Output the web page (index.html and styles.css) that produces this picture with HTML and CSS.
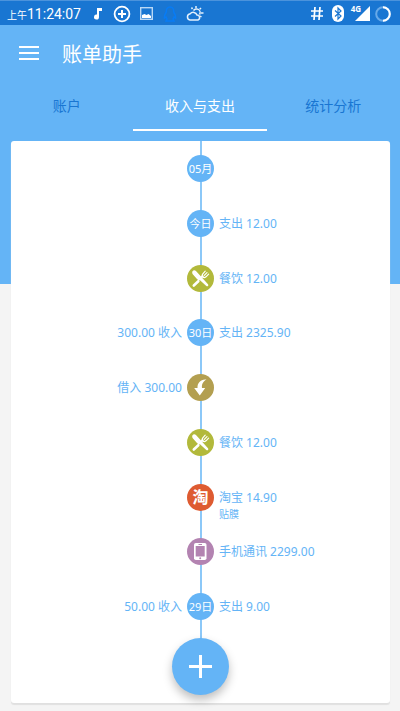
FILE: index.html
```html
<!DOCTYPE html>
<html lang="zh-CN">
<head>
<meta charset="utf-8">
<meta name="viewport" content="width=device-width, initial-scale=1">
<title>账单助手</title>
<link rel="stylesheet" href="styles.css">
</head>
<body>
<svg class="defs" aria-hidden="true">
  <symbol id="food" viewBox="0 0 27 27">
    <path d="M5.500 6.200C6.500 4.800 8 5 9.200 6.200L21 19.200C22 20.500 20.500 22 19.300 21L13 15.200C12 15.500 11 15.200 10.200 14.200L6.200 9.800C5.200 8.700 4.900 7.200 5.500 6.200Z" fill="#fff"/>
    <path d="M6.800 20.500L11.300 16.200" stroke="#fff" stroke-width="2.600" stroke-linecap="round"/>
    <path d="M14.200 12.500L16.200 10.600" stroke="#fff" stroke-width="2"/>
    <path d="M15.800 8.800C14.800 10.200 15 11.300 15.800 12C16.600 12.800 17.800 12.800 19 11.800L21.600 9.200M15.800 8.800L18.200 6.200M17.300 10.400L20 7.700" fill="none" stroke="#fff" stroke-width="1.200" stroke-linecap="round"/>
  </symbol>
</svg>
<div class="hero">
  <div class="status">
    <span class="time"><small>上午</small>11:24:07</span>
    <svg class="s-music" width="10" height="13" viewBox="0 0 10 13"><path d="M4 1h5v3H6v6a2.500 2.500 0 1 1-2-2.400z" fill="#fff"/></svg>
    <svg class="s-plus" width="18" height="18" viewBox="0 0 18 18"><circle cx="9" cy="9" r="7.400" fill="none" stroke="#fff" stroke-width="1.800"/><path d="M9 5v8M5 9h8" stroke="#fff" stroke-width="2"/></svg>
    <svg class="s-image" width="13" height="13" viewBox="0 0 13 13"><rect x=".7" y=".7" width="11.600" height="11.600" fill="none" stroke="#b9d8f5" stroke-width="1.400"/><path d="M2 11V8l2.500-1 2 1 2-1L11 9v2z" fill="#fff"/></svg>
    <svg class="s-qq" width="14" height="16" viewBox="0 0 14 16"><path d="M7 1C4.500 1 3 3 3.300 6C2 8 1 10 1.400 12L3 11L4 13L3 15H11L10 13L11 11L12.600 12C13 10 12 8 10.700 6C11 3 9.500 1 7 1Z" fill="none" stroke="#087cf5" stroke-width="1.500"/></svg>
    <svg class="s-weather" width="18" height="17" viewBox="0 0 18 17"><g fill="none" stroke="#e5f1fc" stroke-width="1.500"><path d="M4 15a3.200 3.200 0 0 1 .2-6.300A4 4 0 0 1 11 10a2.600 2.600 0 0 1 1 5z"/><path d="M7.500 5.500a3.500 3.500 0 0 1 6 4M10 1v2M5.500 2.500l1 1.500M15 3l-1.300 1.300M15 8h2.500M14 11l1.500 1"/></g></svg>
    <span class="spacer"></span>
    <svg class="s-hash" width="12" height="13" viewBox="0 0 12 13"><path d="M4 0L3 13M9 0L8 13M0 4h12M0 9h12" stroke="#fff" stroke-width="1.700"/></svg>
    <svg class="s-bt" width="12" height="17" viewBox="0 0 12 17"><rect width="12" height="17" rx="6" fill="#fff"/><path d="M3 5.500l6 5.500-3 3V3l3 3-6 5.500" fill="none" stroke="#1976d2" stroke-width="1.200"/></svg>
    <span class="net">4G</span>
    <svg class="s-signal" width="15" height="15" viewBox="0 0 15 15"><path d="M15 0v15H0z" fill="#fff"/></svg>
    <svg class="s-ring" width="16" height="16" viewBox="0 0 16 16"><g fill="none" stroke-width="2"><circle cx="8" cy="8" r="6.800" stroke="#68a9e8"/><path d="M8 1.200a6.800 6.800 0 0 1 0 13.600" stroke="#fff"/></g></svg>
  </div>
  <header class="appbar">
    <button class="menu" type="button" aria-label="菜单"><svg width="20" height="14" viewBox="0 0 20 14"><path d="M0 1h20M0 7h20M0 13h20" stroke="#fff" stroke-width="2"/></svg></button>
    <h1>账单助手</h1>
  </header>
  <nav class="tabs">
    <a href="#accounts">账户</a>
    <a href="#flow" class="active" aria-current="page">收入与支出</a>
    <a href="#stats">统计分析</a>
  </nav>
</div>
<main class="card">
  <ol class="timeline">
    <li><span class="dot">05月</span></li>
    <li><span class="dot">今日</span><span class="out">支出 12.00</span></li>
    <li><span class="dot food"><svg width="27" height="27"><use href="#food"/></svg></span><span class="out">餐饮 12.00</span></li>
    <li><span class="in">300.00 收入</span><span class="dot">30日</span><span class="out">支出 2325.90</span></li>
    <li><span class="in">借入 300.00</span><span class="dot borrow"><svg width="27" height="27" viewBox="0 0 27 27"><path d="M19.500 5.500C14 4.800 10.300 8.500 10.500 14H7.200L12.800 21.500L18.200 14H15C14.600 10.500 15.800 7.500 19.500 5.500Z" fill="#fff"/></svg></span></li>
    <li><span class="dot food"><svg width="27" height="27"><use href="#food"/></svg></span><span class="out">餐饮 12.00</span></li>
    <li><span class="dot taobao">淘</span><span class="out">淘宝 14.90<small>贴膜</small></span></li>
    <li><span class="dot phone"><svg width="27" height="27" viewBox="0 0 27 27"><rect x="7" y="5" width="12.500" height="17" rx="1.800" fill="#fff"/><path d="M8.700 8h9v10.500h-9z" fill="#b383b1"/><path d="M11.500 6.500h3.500" stroke="#b383b1"/><circle cx="13.200" cy="20.200" r="1" fill="#b383b1"/></svg></span><span class="out">手机通讯 2299.00</span></li>
    <li><span class="in">50.00 收入</span><span class="dot">29日</span><span class="out">支出 9.00</span></li>
  </ol>
  <button class="fab" type="button" aria-label="添加"><svg width="23" height="23" viewBox="0 0 23 23"><path d="M11.500 0v23M0 11.500h23" stroke="#fff" stroke-width="3"/></svg></button>
</main>
</body>
</html>
```
FILE: styles.css
```css
* { box-sizing: border-box; }

body {
  margin: 0;
  min-height: 100vh;
  display: flex;
  flex-direction: column;
  padding-bottom: 8px;
  background: linear-gradient(#64b4f6 284px, #f4f4f4 284px);
  font-family: "Noto Sans", "Noto Sans CJK SC", sans-serif;
  font-size: 12px;
  color: #64b4f6;
}

svg { display: block; flex: none; }
.defs { position: absolute; width: 0; height: 0; }

button { border: 0; padding: 0; background: none; cursor: pointer; }

.status {
  display: flex;
  align-items: center;
  height: 25px;
  padding: 1px 9px 0 7px;
  background: #1976d2;
  border-top: 1px solid #4b93dc;
  color: #fff;
}

.time { font-size: 14px; font-family: Roboto, "Noto Sans CJK SC", sans-serif; white-space: nowrap; }
.time small { font-size: 10px; }
.s-music { margin-left: 12px; }
.s-plus { margin-left: 10px; }
.s-image { margin-left: 9px; }
.s-qq { margin-left: 10px; }
.s-weather { margin-left: 9px; }
.spacer { flex: 1; }
.s-bt { margin-left: 9px; }
.net {
  margin-left: 7px;
  align-self: flex-start;
  font: bold 8px/14px "Open Sans", Roboto, sans-serif;
}
.s-signal { margin-left: -6px; }
.s-ring { margin-left: 5px; }

.appbar {
  display: flex;
  align-items: center;
  gap: 23px;
  height: 56px;
  padding: 4px 19px 0;
  color: #fff;
}
.appbar h1 { margin: 0; font-size: 20px; font-weight: 400; line-height: 28px; }
.menu { padding-bottom: 4px; }

.tabs { display: grid; grid-template-columns: repeat(3, 1fr); height: 50px; }
.tabs a {
  display: flex;
  align-items: center;
  justify-content: center;
  border-bottom: 2px solid transparent;
  color: #1976d2;
  font-size: 14px;
  text-decoration: none;
}
.tabs .active { color: #fff; border-color: #fff; }

.card {
  position: relative;
  flex: 1;
  display: flex;
  margin: 10px 10px 0 11px;
  border-radius: 3px;
  background: linear-gradient(#8cc8f8, #8cc8f8) center top / 2px 510px no-repeat #fff;
  box-shadow: 0 2px 1px #e0e0e0;
}

.timeline {
  flex: 1;
  display: flex;
  flex-direction: column;
  justify-content: space-between;
  margin: 0;
  padding: 14px 0 83px;
  list-style: none;
}
.timeline li {
  display: grid;
  grid-template-columns: 1fr 27px 1fr;
  column-gap: 5px;
  height: 27px;
  line-height: 28px;
  white-space: nowrap;
}
.dot {
  grid-column: 2;
  grid-row: 1;
  width: 27px;
  height: 27px;
  border-radius: 50%;
  background: #64b4f6;
  color: #fff;
  font-size: 11px;
  text-align: center;
}
.in { grid-column: 1; grid-row: 1; text-align: right; }
.out { grid-column: 3; grid-row: 1; }
.out small { display: block; font-size: 10px; line-height: 4px; }
.food { background: #b2b93b; }
.borrow { background: #b39f50; }
.taobao { background: #de5b31; font-size: 16px; font-weight: 700; line-height: 26px; }
.phone { background: #b383b1; }

.fab {
  position: absolute;
  left: 50%;
  bottom: 8px;
  display: grid;
  place-items: center;
  width: 57px;
  height: 57px;
  margin-left: -29px;
  border-radius: 50%;
  background: #64b4f6;
  box-shadow: 0 5px 10px rgba(0, 0, 0, 0.25);
}
```
